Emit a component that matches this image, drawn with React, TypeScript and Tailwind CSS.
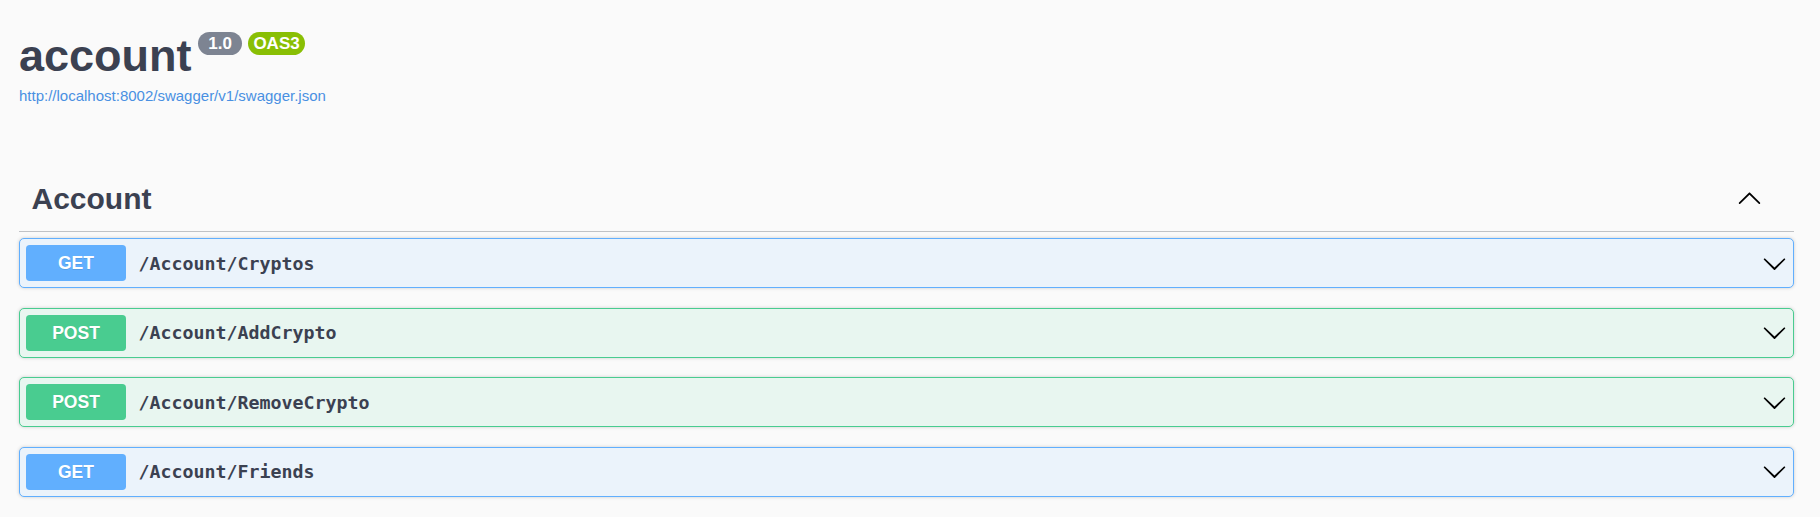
import React from "react";

const sans = { fontFamily: '"Liberation Sans", Arial, sans-serif' };

function ChevronDown() {
  return (
    <svg width="25" height="25" viewBox="0 0 20 20" className="shrink-0">
      <path
        fill="#000"
        d="M17.418 6.109c.272-.268.709-.268.979 0s.271.701 0 .969l-7.908 7.83c-.27.268-.707.268-.979 0l-7.908-7.83c-.27-.268-.27-.701 0-.969.271-.268.709-.268.979 0L10 13.25l7.418-7.141z"
      />
    </svg>
  );
}

function ChevronUp() {
  return (
    <svg width="25" height="25" viewBox="0 0 20 20" className="shrink-0 mt-[-3px]">
      <path
        fill="#000"
        d="M17.418 14.908c.272.268.709.268.979 0s.271-.701 0-.969l-7.908-7.83c-.27-.268-.707-.268-.979 0l-7.908 7.83c-.27.268-.27.701 0 .969.271.268.709.268.979 0L10 7.767l7.418 7.141z"
      />
    </svg>
  );
}

type Op = { method: "GET" | "POST"; path: string };

const ops: Op[] = [
  { method: "GET", path: "/Account/Cryptos" },
  { method: "POST", path: "/Account/AddCrypto" },
  { method: "POST", path: "/Account/RemoveCrypto" },
  { method: "GET", path: "/Account/Friends" },
];

function OpBlock({ op }: { op: Op }) {
  const isGet = op.method === "GET";
  return (
    <div
      className={
        "flex h-[50px] items-center rounded-[5px] border px-[6px] mb-[19.5px] shadow-[0_0_3.75px_rgba(0,0,0,0.19)] " +
        (isGet ? "border-[#61affe] bg-[#ebf3fb]" : "border-[#49cc90] bg-[#e8f6f0]")
      }
    >
      <div
        className={
          "flex h-[36px] w-[100px] shrink-0 items-center justify-center rounded-[3.75px] text-[17.5px] font-bold text-white [text-shadow:0_1px_0_rgba(0,0,0,0.1)] " +
          (isGet ? "bg-[#61affe]" : "bg-[#49cc90]")
        }
        style={sans}
      >
        {op.method}
      </div>
      <div
        className="flex-1 px-[12.5px] text-[18.3px] font-bold text-[#3b4151]"
        style={{ fontFamily: '"DejaVu Sans Mono", "Liberation Mono", monospace' }}
      >
        {op.path}
      </div>
      <ChevronDown />
    </div>
  );
}

export default function App() {
  return (
    <div className="min-h-screen w-full bg-[#fafafa]" style={sans}>
      <div className="pl-[19px] pr-[26px] pt-[29.5px]">
        <div className="flex items-start">
          <h2 className="m-0 text-[45px] leading-[52px] font-bold text-[#3b4151]">account</h2>
          <span className="ml-[6.5px] mt-[2.5px] flex h-[23px] w-[44px] items-center justify-center rounded-full bg-[#7d8492] text-[17px] font-bold text-white">
            1.0
          </span>
          <span className="ml-[6px] mt-[2.5px] flex h-[23px] w-[57px] items-center justify-center rounded-full bg-[#89bf04] text-[17px] font-bold text-white">
            OAS3
          </span>
        </div>
        <div className="mt-[5.8px] text-[15px] leading-[17px] text-[#4990e2]">
          http://localhost:8002/swagger/v1/swagger.json
        </div>

        <div className="mt-[65.7px]">
          <div className="flex items-center border-b border-[rgba(59,65,81,0.3)] pl-[12.5px] pr-[32px] pt-[12.5px] pb-[14.5px]">
            <h3 className="m-0 flex-1 text-[30px] leading-[34px] font-bold text-[#3b4151]">Account</h3>
            <ChevronUp />
          </div>
          <div className="pt-[6.25px]">
            {ops.map((op) => (
              <OpBlock key={op.path} op={op} />
            ))}
          </div>
        </div>
      </div>
    </div>
  );
}
